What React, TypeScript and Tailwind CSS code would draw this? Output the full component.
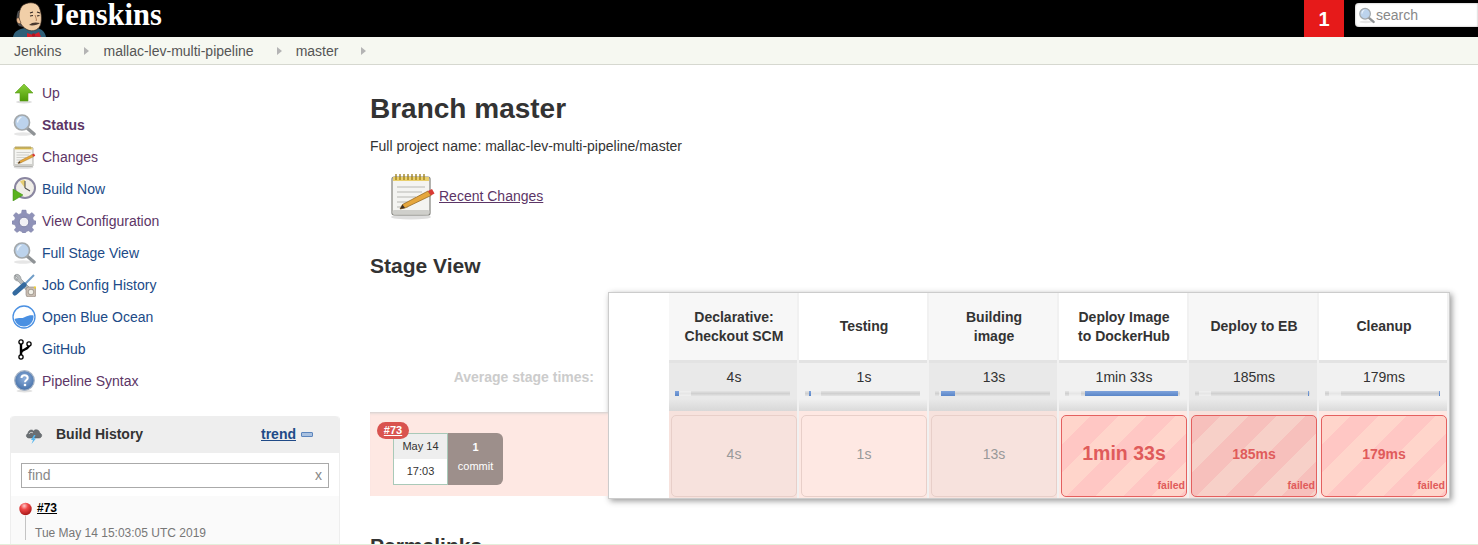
import React from "react";

const Butler = () => (
  <svg width="34" height="35" viewBox="0 0 34 35" className="shrink-0">
    <path d="M0 35C1 29 6 27 12 26L24 26C29 27 32 30 33 35Z" fill="#2f5f78" />
    <path d="M5 9C3 14 3 20 6 24L10 25C9 18 10 12 12 7Z" fill="#4d4f52" />
    <path d="M9 4C13 0 23 -1 26 5C29 11 29 20 27 24C25 28 20 30 15 28C10 26 6 21 6 15C6 10 7 7 9 4Z" fill="#f1cfa8" stroke="#3a2a20" strokeWidth="0.7" />
    <path d="M6 16C4 15 3 17 4 20C5 22 7 22 8 21Z" fill="#eab98e" stroke="#3a2a20" strokeWidth="0.5" />
    <path d="M17 11L20 10M24 10L27 11" stroke="#2d2320" strokeWidth="1.2" fill="none" />
    <path d="M17 14L20 13.5M24 14L26.5 13.5" stroke="#2d2320" strokeWidth="1.1" fill="none" />
    <path d="M22 13C23 16 24 18 23 19" stroke="#a9744f" strokeWidth="0.9" fill="none" />
    <path d="M16 23C19 20 23 20 27 21C25 23 19 24 16 23Z" fill="#4a3a30" />
    <path d="M14 31L20 33L26 30L28 35L21 34.5L14 35.5Z" fill="#d7202c" />
    <circle cx="20.5" cy="33" r="1.7" fill="#b3141f" />
  </svg>
);

const UpIcon = () => (
  <svg width="24" height="24" viewBox="0 0 24 24">
    <defs>
      <linearGradient id="gUp" x1="0" y1="0" x2="0" y2="1">
        <stop offset="0" stopColor="#8ad13a" />
        <stop offset="1" stopColor="#4e9a06" />
      </linearGradient>
    </defs>
    <ellipse cx="12" cy="21" rx="8" ry="1.4" fill="#ddd" />
    <path d="M12 3L21 12H16V20H8V12H3Z" fill="url(#gUp)" stroke="#5d9e1c" strokeWidth="0.6" />
  </svg>
);

const SearchIcon = ({ size = 24 }: { size?: number }) => (
  <svg width={size} height={size} viewBox="0 0 24 24">
    <ellipse cx="11" cy="21" rx="9" ry="1.8" fill="#e6e6e6" />
    <path d="M15 15L22 21" stroke="#8f9396" strokeWidth="3.4" strokeLinecap="round" />
    <circle cx="10" cy="9.5" r="7.5" fill="#bcd3ec" stroke="#a3a8ab" strokeWidth="1.7" />
    <path d="M5 9C5 6 7 4 10 4C8 5.500 6.500 7 6 10Z" fill="#eef5fc" />
  </svg>
);

const NotepadIcon = ({ size = 24 }: { size?: number }) => (
  <svg width={size} height={size} viewBox="0 0 48 48">
    <ellipse cx="23" cy="45" rx="20" ry="2.500" fill="#dedede" />
    <rect x="4" y="5" width="38" height="38" rx="2" fill="#f4f4f1" stroke="#80807b" strokeWidth="1.2" />
    <rect x="4.600" y="38" width="36.800" height="4.500" rx="1.500" fill="#cfcfcb" />
    <rect x="5" y="5" width="36" height="4" fill="#e9cf6c" />
    <path d="M8 2V8M12 2V8M16 2V8M20 2V8M24 2V8M28 2V8M32 2V8M36 2V8" stroke="#9a7c14" strokeWidth="1.3" />
    <path d="M9 15H37M9 20H34M9 25H28M9 30H24M9 35H20" stroke="#b7b7b3" strokeWidth="1.2" />
    <path d="M12 37L14.500 32.500L40 19L43 23.500L17 36Z" fill="#e5a63c" stroke="#8d5f17" strokeWidth="0.7" />
    <path d="M12 37L14.500 32.500L17 36Z" fill="#3c3027" />
    <path d="M40 19L43 23.500L46.500 21.500L44 17Z" fill="#d83a34" />
  </svg>
);

const ClockIcon = () => (
  <svg width="24" height="24" viewBox="0 0 24 24">
    <circle cx="13" cy="11" r="10" fill="#f0eee8" stroke="#8a86a0" strokeWidth="2" />
    <path d="M13 11L8 4.500C9.500 3 11.500 3 13 3Z" fill="#e6cf75" />
    <path d="M13 11V4M13 11L18 14" stroke="#555" strokeWidth="1.1" />
    <path d="M1 12L11 18L1 24Z" fill="#5ab31e" stroke="#3d8a10" strokeWidth="0.5" />
  </svg>
);

const GearIcon = () => (
  <svg width="24" height="24" viewBox="0 0 24 24">
    <path
      d="M10 1H14L14.600 4.300L17.300 5.400L20 3.500L22.700 6.200L20.700 9L21.800 11.500L24 12V15L21 16L20 18.500L21.800 21L19 23.500L16.500 21.800L14 22.700L13.500 24H10.500L10 22.700L7.500 21.800L5 23.500L2.200 21L4 18.500L3 16L0 15V12L2.200 11.500L3.300 9L1.300 6.200L4 3.500L6.700 5.400L9.400 4.300Z"
      fill="#8f92b8"
      stroke="#7c7fa5"
      strokeWidth="0.4"
    />
    <circle cx="12" cy="13" r="4.800" fill="#f1f1f5" stroke="#6f7299" strokeWidth="0.8" />
  </svg>
);

const ToolsIcon = () => (
  <svg width="24" height="24" viewBox="0 0 24 24">
    <path d="M3 2C1 5 3 8 6 8L16 19L19 16L9 6C9 3 6 0 3 2L6 5L5 7Z" fill="#b9bcbd" stroke="#808486" strokeWidth="0.6" />
    <path d="M22 2L12 12" stroke="#6f9cc7" strokeWidth="2" />
    <path d="M12 12L3 20" stroke="#346a9f" strokeWidth="5" strokeLinecap="round" />
    <rect x="14" y="14" width="10" height="10" rx="2.500" fill="#c9bdb2" stroke="#8a8178" strokeWidth="0.6" />
    <circle cx="19" cy="19" r="2.800" fill="#f0efe7" stroke="#7a7268" strokeWidth="0.6" />
    <circle cx="23" cy="14.500" r="1.200" fill="#eccf3a" />
  </svg>
);

const OceanIcon = () => (
  <svg width="24" height="24" viewBox="0 0 24 24">
    <circle cx="12" cy="12" r="11" fill="#fff" stroke="#4a90e2" strokeWidth="1.300" />
    <path d="M2.500 14C7 12 10 14 13 12C16 10.500 19 10 21.500 10.500C22 16 18 21.500 12 21.500C7 21.500 3.500 18 2.500 14Z" fill="#4a90e2" />
  </svg>
);

const GitHubIcon = () => (
  <svg width="24" height="24" viewBox="0 0 24 24">
    <path d="M9 7V19M9 16C9 12 17 13 17 8" stroke="#000" strokeWidth="2.400" fill="none" />
    <circle cx="9" cy="5" r="2.100" fill="#fff" stroke="#000" strokeWidth="1.300" />
    <circle cx="17" cy="7" r="2.100" fill="#fff" stroke="#000" strokeWidth="1.300" />
    <circle cx="9" cy="20" r="2.100" fill="#fff" stroke="#000" strokeWidth="1.300" />
  </svg>
);

const HelpIcon = () => (
  <svg width="24" height="24" viewBox="0 0 24 24">
    <defs>
      <radialGradient id="gHelp" cx="0.500" cy="0.400" r="0.600">
        <stop offset="0" stopColor="#8fb0dc" />
        <stop offset="1" stopColor="#4570a8" />
      </radialGradient>
    </defs>
    <ellipse cx="12.500" cy="22" rx="8" ry="1.500" fill="#e1e1e1" />
    <circle cx="12.500" cy="11.500" r="9.800" fill="url(#gHelp)" stroke="#a9b6c7" strokeWidth="1.200" />
    <path d="M9.500 9C9.500 7 11 6.300 12.500 6.300C14.500 6.300 15.700 7.500 15.700 9C15.700 11 13 11 13 13.300" stroke="#fff" strokeWidth="2" fill="none" />
    <circle cx="13" cy="16" r="1.300" fill="#fff" />
  </svg>
);

const CloudIcon = () => (
  <svg width="18" height="18" viewBox="0 0 18 18">
    <path d="M4 12C1 12 0.500 8.500 3 7.500C3 4 7 3 8.500 5C10.500 2.500 15 4 14.500 7C17.500 7.500 17.500 12 14 12Z" fill="#6a6f73" stroke="#4d5154" strokeWidth="0.5" />
    <path d="M4 8C5 6 7 6 8 7" stroke="#c9cccd" strokeWidth="1" fill="none" />
    <path d="M9 9L6 14H8L6.500 18L11 12.500H9L10.500 9Z" fill="#56b7ef" />
  </svg>
);

const RedBall = () => (
  <svg width="13" height="14" viewBox="0 0 13 14">
    <defs>
      <radialGradient id="gBall" cx="0.400" cy="0.250" r="0.750">
        <stop offset="0" stopColor="#ffc9c9" />
        <stop offset="0.400" stopColor="#ef4646" />
        <stop offset="1" stopColor="#a81818" />
      </radialGradient>
    </defs>
    <circle cx="6.500" cy="7" r="6.200" fill="url(#gBall)" />
  </svg>
);

const Crumb = ({ label }: { label: string }) => (
  <div className="flex items-center gap-[23px]">
    <span>{label}</span>
    <span className="border-y-[4px] border-l-[5px] border-y-transparent border-l-[#b4b4b4]" />
  </div>
);

const tasks = [
  { label: "Up", icon: <UpIcon />, cls: "text-[#5c3566]" },
  { label: "Status", icon: <SearchIcon />, cls: "text-[#5c3566] font-bold" },
  { label: "Changes", icon: <NotepadIcon />, cls: "text-[#5c3566]" },
  { label: "Build Now", icon: <ClockIcon />, cls: "text-[#204a87]" },
  { label: "View Configuration", icon: <GearIcon />, cls: "text-[#5c3566]" },
  { label: "Full Stage View", icon: <SearchIcon />, cls: "text-[#204a87]" },
  { label: "Job Config History", icon: <ToolsIcon />, cls: "text-[#204a87]" },
  { label: "Open Blue Ocean", icon: <OceanIcon />, cls: "text-[#204a87]" },
  { label: "GitHub", icon: <GitHubIcon />, cls: "text-[#204a87]" },
  { label: "Pipeline Syntax", icon: <HelpIcon />, cls: "text-[#5c3566]" },
];

type Stage = {
  name: string[];
  avg: string;
  time: string;
  start: number;
  width: number;
  failed?: boolean;
  big?: boolean;
};

const stages: Stage[] = [
  { name: ["Declarative:", "Checkout SCM"], avg: "4s", time: "4s", start: 0, width: 4 },
  { name: ["Testing"], avg: "1s", time: "1s", start: 4, width: 2 },
  { name: ["Building", "image"], avg: "13s", time: "13s", start: 6, width: 14 },
  { name: ["Deploy Image", "to DockerHub"], avg: "1min 33s", time: "1min 33s", start: 20, width: 93, failed: true, big: true },
  { name: ["Deploy to EB"], avg: "185ms", time: "185ms", start: 113, width: 1, failed: true },
  { name: ["Cleanup"], avg: "179ms", time: "179ms", start: 114, width: 1, failed: true },
];

const StageColumn = ({ stage, odd }: { stage: Stage; odd: boolean }) => (
  <div className="w-[130px] flex flex-col border-r-2 border-[#f1f1f1]">
    <div className={`h-[67px] pl-[2px] flex flex-col items-center justify-center text-[14px] leading-[19px] font-bold text-[#333333] ${odd ? "bg-[#f7f7f7]" : "bg-white"}`}>
      {stage.name.map((l) => (
        <span key={l}>{l}</span>
      ))}
    </div>
    <div className={`h-[51px] pl-[2px] border-t-[3px] border-[#e3e3e3] flex flex-col items-center ${odd ? "bg-[#e9e9e9]" : "bg-[#f1f1f1]"} relative`}>
      <span className="text-[14px] leading-[19px] mt-[5px] text-[#333333]">{stage.avg}</span>
      <div className="mt-[4px] self-start ml-[4px] w-[115px] h-[5px] bg-gradient-to-b from-[#e4e4e4] via-[#d0d0d0] to-[#e4e4e4] relative">
        <div className="absolute left-[4px] top-0 h-[5px] w-[12px] bg-gradient-to-b from-[#f0f0f0] via-[#e6e6e6] to-[#f0f0f0]" />
        <div
          className="absolute top-0 h-[5px] bg-gradient-to-b from-[#7fa3dc] to-[#5a86c8]"
          style={{ left: stage.start, width: stage.width }}
        />
      </div>
      <div className="absolute left-0 right-0 bottom-0 h-[12px] bg-gradient-to-b from-transparent to-[#d0d0d0] opacity-70" />
    </div>
    <div className={`h-[87px] pl-[2px] pt-[4px] pb-[1px] ${odd ? "bg-[#f7e2dd]" : "bg-[#fee8e3]"}`}>
      {stage.failed ? (
        <div
          className={`relative h-full rounded-[5px] border-[1.5px] border-[#e4605f] flex items-center justify-center font-bold text-[#e05b5b] ${
            odd
              ? "bg-[repeating-linear-gradient(135deg,#f7c0bc_0,#f7c0bc_20px,#f7d0c8_20px,#f7d0c8_40px)]"
              : "bg-[repeating-linear-gradient(135deg,#ffd5cb_0,#ffd5cb_20px,#ffc7c4_20px,#ffc7c4_40px)]"
          } ${stage.big ? "text-[19.5px] pb-[5px]" : "text-[14px] pb-[3px]"}`}
        >
          {stage.time}
          <span className="absolute right-[1px] bottom-[4px] text-[10.5px] leading-[13px]">failed</span>
        </div>
      ) : (
        <div className="h-full pb-[3px] rounded-[5px] border border-[#e8cfc9] flex items-center justify-center text-[14px] text-[#999999]">
          {stage.time}
        </div>
      )}
    </div>
  </div>
);

export default function App() {
  return (
    <div className="h-[545px] w-[1478px] overflow-hidden flex flex-col bg-white font-['Liberation_Sans',Arial,sans-serif] text-[14px] text-[#333333]">
      <header className="h-[37px] shrink-0 bg-black flex items-start">
        <div className="ml-[13px] mt-[2px]">
          <Butler />
        </div>
        <span className="ml-[3px] text-[30.5px] leading-[30px] font-bold text-white font-['Liberation_Serif',serif]">
          Jenskins
        </span>
        <div className="ml-auto w-[40px] h-[37px] bg-[#e61a1a] flex items-center justify-center text-[20px] font-bold text-white">1</div>
        <div className="ml-[11px] mt-[3px] w-[123px] h-[24px] bg-white rounded-l-[4px] flex items-center pl-[3px] text-[#888888] shadow-[inset_0_0_2px_#999]">
          <SearchIcon size={17} />
          <span className="ml-[1px]">search</span>
        </div>
      </header>

      <nav className="h-[28px] shrink-0 bg-[#f6f8f1] border-b border-[#d6d8d0] flex items-center gap-[14px] pl-[14px] pt-[1px] text-[#555555]">
        <Crumb label="Jenkins" />
        <Crumb label="mallac-lev-multi-pipeline" />
        <Crumb label="master" />
      </nav>

      <div className="flex-1 min-h-0 flex overflow-hidden">
        <aside className="w-[370px] shrink-0 flex flex-col pt-[12px]">
          <ul className="flex flex-col">
            {tasks.map((t) => (
              <li key={t.label} className="h-[32px] flex items-center pl-[12px] gap-[6px]">
                <span className="w-[24px] h-[24px] shrink-0 flex">{t.icon}</span>
                <span className={t.cls}>{t.label}</span>
              </li>
            ))}
          </ul>
          <section className="ml-[10px] mt-[19px] w-[330px] rounded-t-[4px] border-x border-[#eeeeee] flex-1 flex flex-col">
            <div className="h-[37px] shrink-0 bg-[#eeeeee] rounded-t-[4px] flex items-center pl-[14px] pr-[26px]">
              <CloudIcon />
              <span className="ml-[13px] font-bold">Build History</span>
              <span className="ml-auto mr-[5px] font-bold text-[#204a87] underline">trend</span>
              <span className="w-[12px] h-[5px] bg-[#a9c1e0] border border-[#5c85bd] rounded-[1px]" />
            </div>
            <div className="h-[43px] shrink-0 px-[10px] pt-[10px]">
              <div className="h-[25px] border border-[#aaaaaa] flex items-center px-[6px] text-[#888888] justify-between">
                <span>find</span>
                <span>x</span>
              </div>
            </div>
            <div className="flex-1 bg-[#fafafa] flex flex-col relative pl-[24px]">
              <div className="absolute left-[8px] top-[6px] flex flex-col items-center">
                <RedBall />
                <span className="w-px h-[24px] bg-[#c4c4c4]" />
              </div>
              <span className="mt-[5px] ml-[2px] self-start text-[12px] leading-[15px] font-bold text-black underline">#73</span>
              <span className="mt-[10px] text-[12px] leading-[15px] text-[#777777]">Tue May 14 15:03:05 UTC 2019</span>
            </div>
          </section>
        </aside>

        <main className="flex-1 min-w-0 flex flex-col">
          <h1 className="mt-[29px] text-[28px] leading-[30px] font-bold text-[#333333]">Branch master</h1>
          <p className="mt-[12px] leading-[20px]">Full project name: mallac-lev-multi-pipeline/master</p>
          <div className="mt-[16px] ml-[18px] h-[48px] flex items-center">
            <NotepadIcon size={48} />
            <span className="ml-[3px] text-[#5c3566] underline">Recent Changes</span>
          </div>
          <h2 className="mt-[33px] text-[21px] leading-[26px] font-bold text-[#333333]">Stage View</h2>
          <div className="mt-[13px] flex items-start">
            <div className="w-[238px] shrink-0 flex flex-col">
              <div className="h-[95px] pr-[14px] flex items-end justify-end font-bold text-[#cccccc] leading-[20px]">
                <span>Average stage times:</span>
              </div>
              <div className="mt-[25px] h-[84px] bg-[#fee8e3] shadow-[inset_0_3px_3px_-2px_#ccc] relative flex items-start pl-[23px] pt-[21px]">
                <span className="absolute left-[7px] top-[10px] h-[17px] w-[32px] rounded-full bg-[#d9534f] text-white text-[11px] leading-[17px] font-bold text-center underline">
                  #73
                </span>
                <div className="w-[55px] h-[52px] border-[1.5px] border-[#a9c9b8] flex flex-col text-center text-[11px] text-[#333333] bg-white">
                  <span className="h-[25px] leading-[25px] bg-[#eeeeee]">May 14</span>
                  <span className="flex-1 leading-[25px]">17:03</span>
                </div>
                <div className="w-[55px] h-[52px] bg-[#9d8f8b] rounded-r-[6px] flex flex-col items-center text-white text-[11px]">
                  <span className="mt-[8px] leading-[13px] font-bold">1</span>
                  <span className="mt-[6px] leading-[13px]">commit</span>
                </div>
              </div>
            </div>
            <div className="flex border border-[#cccccc] bg-white shadow-[2px_2px_6px_#999999] shrink-0">
              <div className="w-[60px] shrink-0 bg-white" />
              {stages.map((s, i) => (
                <StageColumn key={s.avg} stage={s} odd={i % 2 === 0} />
              ))}
            </div>
          </div>
          <h2 className="mt-[34px] text-[21px] leading-[26px] font-bold text-[#333333]">Permalinks</h2>
        </main>
      </div>
      <div className="h-px shrink-0 bg-[#e4eedb]" />
    </div>
  );
}
